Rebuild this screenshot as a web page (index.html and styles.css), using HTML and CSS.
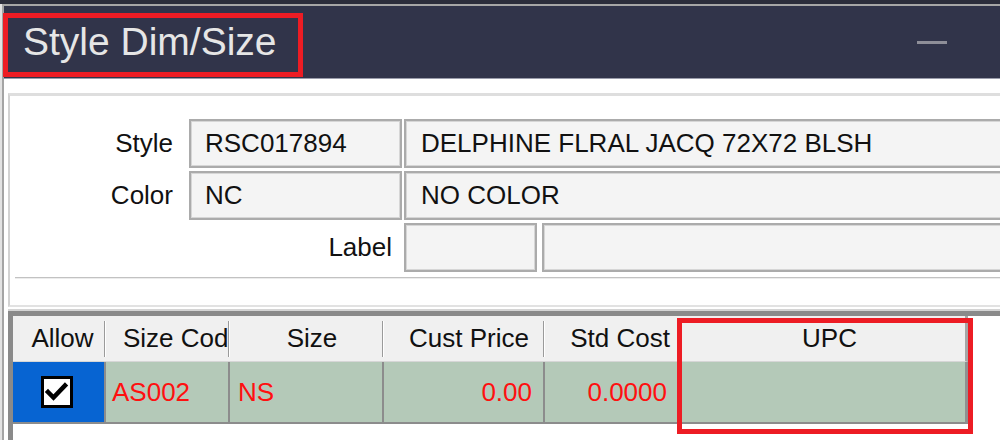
FILE: index.html
```html
<!DOCTYPE html>
<html>
<head>
<meta charset="utf-8">
<link rel="stylesheet" href="styles.css">
</head>
<body>
<div class="screen">
  <div class="topstrip"></div>
  <div class="window">
    <div class="titlebar">
      <div class="title">Style Dim/Size</div>
      <div class="minimize"></div>
    </div>
    <div class="client">
      <div class="group">
        <div class="frow">
          <div class="flabel">Style</div>
          <div class="field f-code">RSC017894</div>
          <div class="field f-desc">DELPHINE FLRAL JACQ 72X72 BLSH</div>
        </div>
        <div class="frow">
          <div class="flabel">Color</div>
          <div class="field f-code">NC</div>
          <div class="field f-desc">NO COLOR</div>
        </div>
        <div class="frow">
          <div class="flabel flabel-wide">Label</div>
          <div class="field f-lab"></div>
          <div class="field f-desc f-desc2"></div>
        </div>
        <div class="hsep"></div>
      </div>
      <div class="grid">
        <div class="table">
          <div class="hcell h-allow">Allow</div>
          <div class="hcell h-left">Size Cod</div>
          <div class="hcell h-size">Size</div>
          <div class="hcell h-right h-price">Cust Price</div>
          <div class="hcell h-right h-cost">Std Cost</div>
          <div class="hcell h-upc">UPC</div>

          <div class="dcell d-allow">
            <span class="checkbox">
              <svg width="26" height="26" viewBox="0 0 26 26"><path d="M4 13 L9.5 18.5 L21 6.5" fill="none" stroke="#000" stroke-width="4.5" stroke-linejoin="miter" stroke-linecap="square"/></svg>
            </span>
          </div>
          <div class="dcell d-left">AS002</div>
          <div class="dcell d-left d-ns">NS</div>
          <div class="dcell d-right">0.00</div>
          <div class="dcell d-right">0.0000</div>
          <div class="dcell d-upc"></div>
        </div>
        <div class="upc-mark"></div>
      </div>
    </div>
  </div>
</div>
</body>
</html>
```

FILE: styles.css
```css
* { box-sizing: border-box; }
html, body {
  margin: 0;
  padding: 0;
  width: 1000px;
  height: 440px;
  overflow: hidden;
  background: #e2e2e2;
  font-family: "Liberation Sans", Arial, sans-serif;
}
.screen {
  width: 1000px;
  height: 440px;
  display: flex;
  flex-direction: column;
  overflow: hidden;
}
.topstrip {
  height: 4px;
  background: #2b2d3b;
  flex: none;
}
.window {
  flex: 1;
  margin-left: 2px;
  border-left: 2px solid #a4a4a4;
  border-top: 2px solid #a6a6a6;
  display: flex;
  flex-direction: column;
  min-height: 0;
}
.titlebar {
  flex: none;
  height: 72px;
  background: #31344a;
  display: flex;
  align-items: flex-start;
  padding-top: 7px;
}
.title {
  margin-left: -1px;
  border: 5px solid #ed1c24;
  padding: 0 21px 7px 15px;
  line-height: 47px;
  font-size: 39px;
  color: #e6e6e6;
  white-space: nowrap;
}
.minimize {
  margin-left: auto;
  margin-right: 53px;
  margin-top: 28px;
  width: 30px;
  height: 3px;
  background: #8e8e98;
}
.client {
  flex: 1;
  background: #fff;
  border-top: 1px solid #9a9cab;
  display: flex;
  flex-direction: column;
  min-height: 0;
}
.group {
  flex: none;
  margin-top: 14px;
  margin-left: 4px;
  width: 1020px;
  border-top: 3px solid #dedede;
  border-left: 2px solid #d2d2d2;
  border-bottom: 2px solid #e2e2e2;
  padding-top: 23px;
  padding-bottom: 26px;
  display: flex;
  flex-direction: column;
  gap: 3px;
}
.frow {
  display: flex;
  height: 49px;
  align-items: stretch;
}
.flabel {
  width: 163px;
  margin-right: 16px;
  text-align: right;
  font-size: 26px;
  line-height: 49px;
  color: #111;
}
.flabel-wide {
  width: 382px;
  margin-right: 12px;
}
.field {
  background: #f4f4f4;
  border: 2px solid #ababab;
  box-shadow: inset 0 0 0 1px #d6d6d6;
  font-size: 26px;
  line-height: 45px;
  padding-left: 14px;
  color: #111;
  white-space: nowrap;
  overflow: hidden;
}
.f-code {
  width: 213px;
  margin-right: 2px;
}
.f-desc {
  flex: 1;
  padding-left: 15px;
}
.f-lab {
  width: 133px;
  margin-right: 5px;
}
.hsep {
  margin-top: 2px;
  margin-left: 5px;
  height: 2px;
  border-top: 1px solid #c2c2c2;
  border-bottom: 1px solid #ececec;
}
.grid {
  flex: 1;
  position: relative;
  margin-top: 4px;
  margin-left: 4px;
  width: 1020px;
  border-top: 5px solid #8a8a8a;
  border-left: 5px solid #8a8a8a;
  box-shadow: 0 -2px 0 #d4d4d4;
  background: #fff;
}
.table {
  display: grid;
  grid-template-columns: 93px 124px 154px 161px 135px 288px;
  grid-template-rows: 46px 62px;
  width: 955px;
}
.hcell {
  background:
    linear-gradient(#9a9a9a, #9a9a9a) no-repeat calc(100% - 1px) 50% / 1px 36px,
    linear-gradient(#ffffff, #ffffff) no-repeat 100% 50% / 1px 36px,
    #f0f0f0;
  border-bottom: 1px solid #d6d6d6;
  font-size: 26px;
  line-height: 45px;
  color: #111;
  white-space: nowrap;
  overflow: hidden;
}
.h-allow { text-align: center; padding-left: 6px; }
.h-left { padding-left: 17px; }
.h-size { text-align: center; padding-left: 10px; }
.h-right { text-align: right; }
.h-price { padding-right: 16px; }
.h-cost { padding-right: 10px; }
.h-upc {
  text-align: center;
  padding-left: 14px;
  background: #f0f0f0;
  border-right: 3px solid #a6a6a6;
}
.dcell {
  background: #b4c9b8;
  border-right: 2px solid #8c8c8c;
  border-bottom: 2px solid #8c8c8c;
  font-size: 26px;
  line-height: 60px;
  color: #ff1010;
  white-space: nowrap;
  overflow: hidden;
}
.d-allow {
  background: #0764d2;
  display: flex;
  align-items: center;
  justify-content: center;
  padding-right: 3px;
}
.checkbox {
  width: 32px;
  height: 32px;
  background: #fff;
  border: 3px solid #000;
  display: flex;
  align-items: center;
  justify-content: center;
}
.checkbox svg { display: block; }
.d-left { padding-left: 6px; }
.d-ns { padding-left: 8px; }
.d-right { text-align: right; padding-right: 11px; }
.d-upc { border-right: 3px solid #909090; }
.upc-mark {
  position: absolute;
  left: 664px;
  top: 2px;
  width: 296px;
  height: 116px;
  border: 5px solid #ed1c24;
}
```
